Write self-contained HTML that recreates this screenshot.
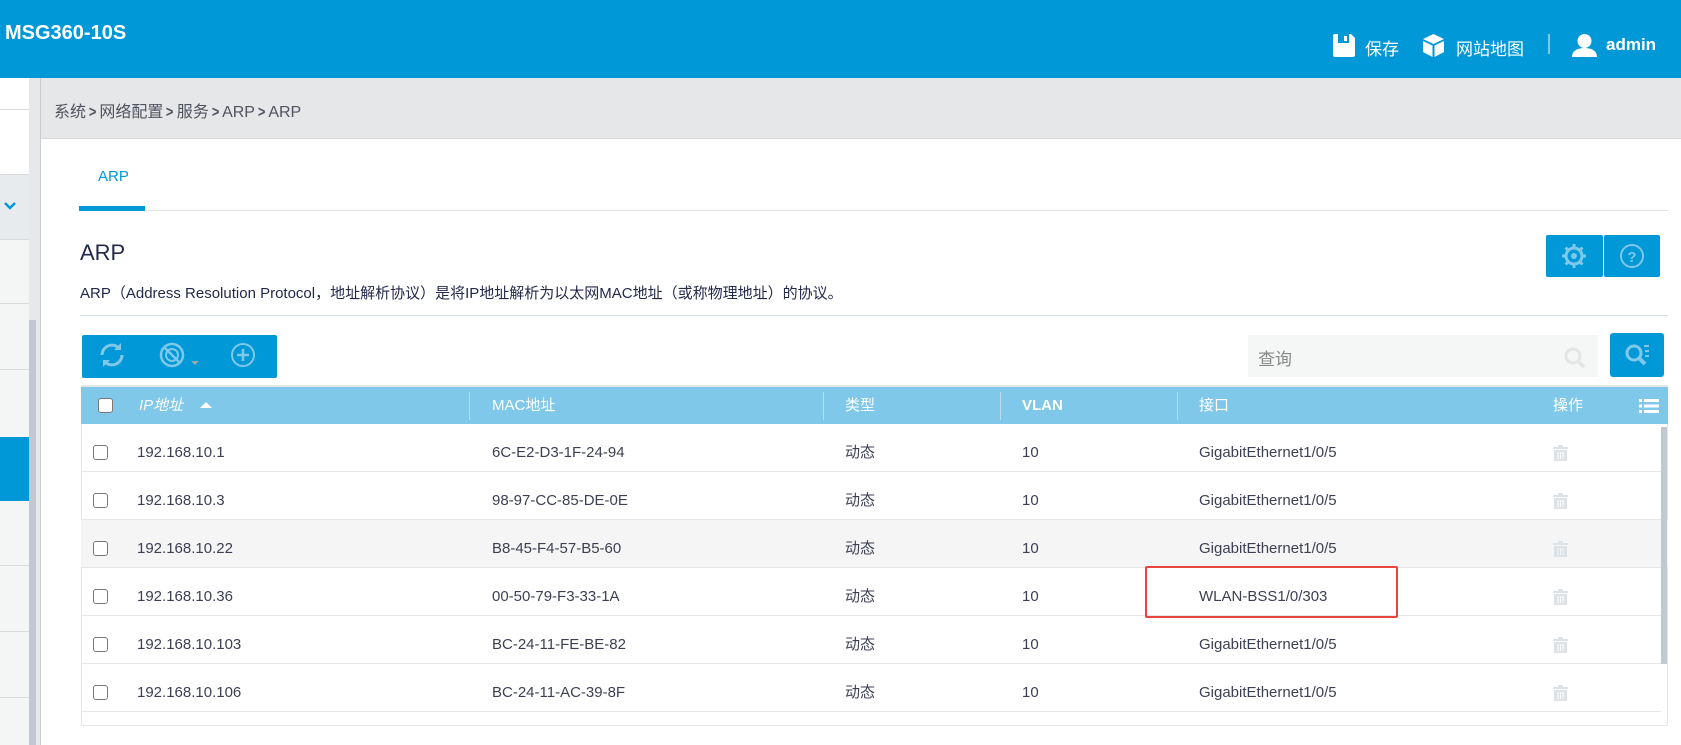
<!DOCTYPE html>
<html><head><meta charset="utf-8"><style>
*{margin:0;padding:0;box-sizing:border-box}
body{width:1681px;height:745px;overflow:hidden;background:#fff;font-family:"Liberation Sans","Noto Sans CJK SC",sans-serif;position:relative;color:#3c3f52}
.a{position:absolute}
.hdr{left:0;top:0;width:1681px;height:78px;background:#0098d6}
.t{white-space:nowrap}
.cb{width:15px;height:15px;border:1.5px solid #777;border-radius:3px;background:#fff}
.row{left:81px;width:1587px;height:48px;border-bottom:1px solid #e4e6e8;font-size:15px}
.row span{position:absolute;top:5px;line-height:48px;height:43px;white-space:nowrap}
.row .cb{top:21px!important}
.hd{color:#fff;font-size:15px;top:387px;line-height:37px;height:37px}
.dv{top:392px;width:1px;height:28px;background:#b9def1}
.bc b{display:inline-block;margin:0 2px;font-weight:bold;transform:scaleX(0.8)}
</style></head><body>
<div class="a hdr"></div>
<div class="a t" style="left:5px;top:22px;color:#fff;font-size:20px;font-weight:bold;">MSG360-10S</div>
<svg class="a" style="left:1333px;top:34px" width="22" height="23" viewBox="0 0 22 23"><path d="M2 0h16l4 4v17a2 2 0 0 1-2 2H2a2 2 0 0 1-2-2V2a2 2 0 0 1 2-2z" fill="#fff"/><rect x="5" y="0" width="11" height="9" fill="#0098d6"/><rect x="11" y="2" width="3" height="5" fill="#fff"/></svg>
<div class="a t" style="left:1365px;top:35px;color:#fff;font-size:17px">保存</div>
<svg class="a" style="left:1423px;top:34px" width="21" height="23" viewBox="0 0 21 23"><path d="M10.5 0L21 5 10.5 10 0 5z" fill="#fff"/><path d="M0 7l9.5 4.5V23L0 18z" fill="#fff"/><path d="M21 7l-9.5 4.5V23L21 18z" fill="#fff"/></svg>
<div class="a t" style="left:1456px;top:35px;color:#fff;font-size:17px">网站地图</div>
<div class="a" style="left:1548px;top:34px;width:2px;height:20px;background:#7fc8ea"></div>
<svg class="a" style="left:1572px;top:34px" width="25" height="23" viewBox="0 0 25 23"><circle cx="12.5" cy="7" r="7" fill="#fff"/><path d="M0 23c0-6 5-9 12.5-9S25 17 25 23z" fill="#fff"/></svg>
<div class="a t" style="left:1606px;top:35px;color:#fff;font-size:17px;font-weight:bold">admin</div>
<div class="a" style="left:0;top:78px;width:29px;height:667px;background:#f4f6f6"></div>
<div class="a" style="left:0;top:78px;width:29px;height:96px;background:#fff"></div>
<div class="a" style="left:0;top:109px;width:29px;height:1px;background:#d8dadc"></div>
<div class="a" style="left:0;top:174px;width:29px;height:65px;background:#e8ebed;border-top:1px solid #d8dadc"></div>
<svg class="a" style="left:3px;top:201px" width="14" height="10"><path d="M2 2l5 5 5-5" stroke="#0098d6" stroke-width="2.5" fill="none"/></svg>
<div class="a" style="left:0;top:239px;width:29px;height:1px;background:#d8dadc"></div>
<div class="a" style="left:0;top:303px;width:29px;height:1px;background:#d8dadc"></div>
<div class="a" style="left:0;top:369px;width:29px;height:1px;background:#d8dadc"></div>
<div class="a" style="left:0;top:437px;width:29px;height:64px;background:#0098d6"></div>
<div class="a" style="left:0;top:565px;width:29px;height:1px;background:#d8dadc"></div>
<div class="a" style="left:0;top:631px;width:29px;height:1px;background:#d8dadc"></div>
<div class="a" style="left:0;top:697px;width:29px;height:1px;background:#d8dadc"></div>
<div class="a" style="left:29px;top:78px;width:11px;height:667px;background:#e6e8ea"></div>
<div class="a" style="left:29px;top:320px;width:7px;height:425px;background:#c1c8cf"></div>
<div class="a" style="left:40px;top:78px;width:1px;height:667px;background:#c9cbcd"></div>
<div class="a" style="left:41px;top:78px;width:1640px;height:61px;background:#e6e7e9;border-bottom:1px solid #d6d8da"></div>
<div class="a t bc" style="left:54px;top:98px;font-size:16px;color:#50525e">系统<b>&gt;</b>网络配置<b>&gt;</b>服务<b>&gt;</b>ARP<b>&gt;</b>ARP</div>
<div class="a t" style="left:98px;top:168px;font-size:15px;color:#0098d6">ARP</div>
<div class="a" style="left:79px;top:210px;width:1589px;height:1px;background:#e2e4e6"></div>
<div class="a" style="left:79px;top:206px;width:66px;height:5px;background:#0098d6"></div>
<div class="a t" style="left:80px;top:240px;font-size:22px;color:#23294a">ARP</div>
<div class="a t" style="left:80px;top:282px;font-size:15px;color:#23294a">ARP（Address Resolution Protocol，地址解析协议）是将IP地址解析为以太网MAC地址（或称物理地址）的协议。</div>
<div class="a" style="left:80px;top:315px;width:1588px;height:1px;background:#d3dbe3"></div>
<div class="a" style="left:1546px;top:235px;width:57px;height:42px;background:#0098d6;border-radius:2px"></div>
<div class="a" style="left:1604px;top:235px;width:56px;height:42px;background:#0098d6;border-radius:2px"></div>
<svg class="a" style="left:1561px;top:243px" width="26" height="26" viewBox="0 0 26 26"><circle cx="13" cy="13" r="8" fill="none" stroke="#7fc8ea" stroke-width="3"/><circle cx="13" cy="13" r="3" fill="#7fc8ea"/><g stroke="#7fc8ea" stroke-width="3"><path d="M13 1v4M13 21v4M1 13h4M21 13h4M4.5 4.5l3 3M18.5 18.5l3 3M4.5 21.5l3-3M18.5 7.5l3-3"/></g></svg>
<svg class="a" style="left:1619px;top:243px" width="26" height="26" viewBox="0 0 26 26"><circle cx="13" cy="13" r="11" fill="none" stroke="#7fc8ea" stroke-width="2"/><text x="13" y="19" text-anchor="middle" font-size="15" font-weight="bold" fill="#7fc8ea" font-family="Liberation Sans">?</text></svg>
<div class="a" style="left:82px;top:335px;width:195px;height:43px;background:#0098d6;border-radius:2px"></div>
<svg class="a" style="left:98px;top:341px" width="28" height="28" viewBox="0 0 28 28"><path d="M4 14a10 10 0 0 1 17-7" fill="none" stroke="#7fc8ea" stroke-width="3"/><path d="M24 14a10 10 0 0 1-17 7" fill="none" stroke="#7fc8ea" stroke-width="3"/><path d="M23 2v7h-7z" fill="#7fc8ea"/><path d="M5 26v-7h7z" fill="#7fc8ea"/></svg>
<svg class="a" style="left:159px;top:342px" width="28" height="28" viewBox="0 0 28 28"><circle cx="13" cy="13" r="11" fill="none" stroke="#7fc8ea" stroke-width="2.5"/><circle cx="13" cy="13" r="6" fill="none" stroke="#7fc8ea" stroke-width="2"/><path d="M5 5l16 16" stroke="#7fc8ea" stroke-width="2.5"/></svg>
<div class="a" style="left:191px;top:361px;width:0;height:0;border-left:4px solid transparent;border-right:4px solid transparent;border-top:4px solid #9aa"></div>
<svg class="a" style="left:230px;top:342px" width="28" height="28" viewBox="0 0 28 28"><circle cx="13" cy="13" r="11" fill="none" stroke="#7fc8ea" stroke-width="2"/><path d="M13 7v12M7 13h12" stroke="#7fc8ea" stroke-width="2.5"/></svg>
<div class="a" style="left:1248px;top:335px;width:350px;height:42px;background:#f5f7f7"></div>
<div class="a t" style="left:1258px;top:345px;font-size:17px;color:#888">查询</div>
<svg class="a" style="left:1563px;top:346px" width="24" height="24" viewBox="0 0 24 24"><circle cx="10" cy="10" r="7" fill="none" stroke="#e4e6e6" stroke-width="3"/><path d="M15 15l6 6" stroke="#e4e6e6" stroke-width="4"/></svg>
<div class="a" style="left:1610px;top:333px;width:54px;height:44px;background:#0098d6;border-radius:3px"></div>
<svg class="a" style="left:1623px;top:341px" width="30" height="28" viewBox="0 0 30 28"><circle cx="11" cy="12" r="7" fill="none" stroke="#7fc8ea" stroke-width="3"/><path d="M16 17l6 6" stroke="#7fc8ea" stroke-width="4"/><path d="M21 5h5M22 10h4M22 15h4" stroke="#7fc8ea" stroke-width="2"/></svg>
<div class="a" style="left:81px;top:385px;width:1587px;height:341px;border:1px solid #e4e6e8;border-top:2px solid #e4e6e8"></div>
<div class="a" style="left:81px;top:387px;width:1587px;height:37px;background:#7fc8ea"></div>
<div class="a cb" style="left:98px;top:398px"></div>
<div class="a t hd" style="left:139px;font-style:italic">IP地址</div>
<div class="a" style="left:200px;top:402px;border-left:6px solid transparent;border-right:6px solid transparent;border-bottom:6px solid #fff"></div>
<div class="a dv" style="left:469px"></div><div class="a t hd" style="left:492px">MAC地址</div>
<div class="a dv" style="left:823px"></div><div class="a t hd" style="left:845px">类型</div>
<div class="a dv" style="left:1000px"></div><div class="a t hd" style="left:1022px;font-weight:bold">VLAN</div>
<div class="a dv" style="left:1177px"></div><div class="a t hd" style="left:1199px">接口</div>
<div class="a t hd" style="left:1553px">操作</div>
<svg class="a" style="left:1639px;top:398px" width="20" height="16"><g fill="#fff"><rect x="0" y="1" width="3" height="3"/><rect x="5" y="1" width="15" height="3"/><rect x="0" y="6.5" width="3" height="3"/><rect x="5" y="6.5" width="15" height="3"/><rect x="0" y="12" width="3" height="3"/><rect x="5" y="12" width="15" height="3"/></g></svg>

<div class="a row" style="top:424px"><div class="a cb" style="left:12px"></div><span style="left:56px">192.168.10.1</span><span style="left:411px">6C-E2-D3-1F-24-94</span><span style="left:764px">动态</span><span style="left:941px">10</span><span style="left:1118px">GigabitEthernet1/0/5</span></div>
<div class="a row" style="top:472px"><div class="a cb" style="left:12px"></div><span style="left:56px">192.168.10.3</span><span style="left:411px">98-97-CC-85-DE-0E</span><span style="left:764px">动态</span><span style="left:941px">10</span><span style="left:1118px">GigabitEthernet1/0/5</span></div>
<div class="a row" style="top:520px;background:#f5f5f5"><div class="a cb" style="left:12px"></div><span style="left:56px">192.168.10.22</span><span style="left:411px">B8-45-F4-57-B5-60</span><span style="left:764px">动态</span><span style="left:941px">10</span><span style="left:1118px">GigabitEthernet1/0/5</span></div>
<div class="a row" style="top:568px"><div class="a cb" style="left:12px"></div><span style="left:56px">192.168.10.36</span><span style="left:411px">00-50-79-F3-33-1A</span><span style="left:764px">动态</span><span style="left:941px">10</span><span style="left:1118px">WLAN-BSS1/0/303</span></div>
<div class="a row" style="top:616px"><div class="a cb" style="left:12px"></div><span style="left:56px">192.168.10.103</span><span style="left:411px">BC-24-11-FE-BE-82</span><span style="left:764px">动态</span><span style="left:941px">10</span><span style="left:1118px">GigabitEthernet1/0/5</span></div>
<div class="a row" style="top:664px;width:1580px"><div class="a cb" style="left:12px"></div><span style="left:56px">192.168.10.106</span><span style="left:411px">BC-24-11-AC-39-8F</span><span style="left:764px">动态</span><span style="left:941px">10</span><span style="left:1118px">GigabitEthernet1/0/5</span></div>
<div class="a" style="left:1145px;top:566px;width:253px;height:52px;border:2px solid #e8463c;border-radius:2px"></div>
<div class="a" style="left:1661px;top:427px;width:6px;height:237px;background:#c1c8cf"></div>
<svg width="0" height="0" style="position:absolute"><defs><g id="tr" fill="#dde2e7"><rect x="0" y="2" width="15" height="2"/><rect x="5" y="0" width="5" height="2"/><path d="M1 5h13v11H1z"/></g></defs></svg>
<svg class="a" style="left:1553px;top:445px" width="15" height="17"><use href="#tr"/><path d="M5 7v7M7.5 7v7M10 7v7" stroke="#fff"/></svg>
<svg class="a" style="left:1553px;top:493px" width="15" height="17"><use href="#tr"/><path d="M5 7v7M7.5 7v7M10 7v7" stroke="#fff"/></svg>
<svg class="a" style="left:1553px;top:541px" width="15" height="17"><use href="#tr"/><path d="M5 7v7M7.5 7v7M10 7v7" stroke="#f5f5f5"/></svg>
<svg class="a" style="left:1553px;top:589px" width="15" height="17"><use href="#tr"/><path d="M5 7v7M7.5 7v7M10 7v7" stroke="#fff"/></svg>
<svg class="a" style="left:1553px;top:637px" width="15" height="17"><use href="#tr"/><path d="M5 7v7M7.5 7v7M10 7v7" stroke="#fff"/></svg>
<svg class="a" style="left:1553px;top:685px" width="15" height="17"><use href="#tr"/><path d="M5 7v7M7.5 7v7M10 7v7" stroke="#fff"/></svg>
</body></html>
